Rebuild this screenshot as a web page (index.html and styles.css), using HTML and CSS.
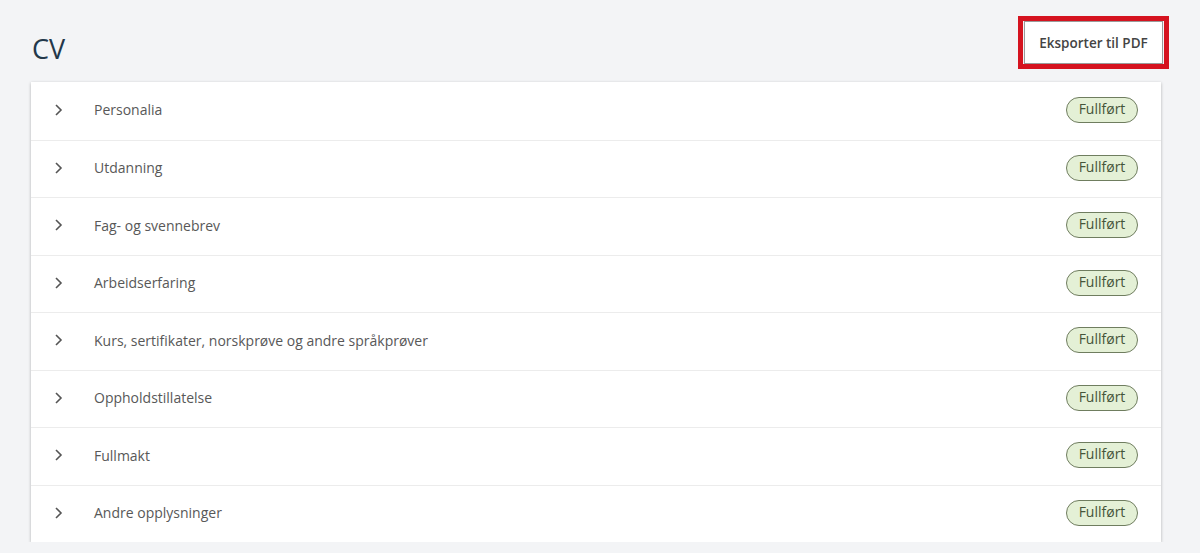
FILE: index.html
```html
<!DOCTYPE html>
<html lang="no">
<head>
    <meta charset="UTF-8">
    <title>CV</title>
    <link rel="stylesheet" href="styles.css">
</head>
<body>
    <div class="page">
        <div class="cv-header">
            <h1>CV</h1>
            <div class="highlight">
                <button class="export-btn">Eksporter til PDF</button>
            </div>
        </div>

        <div class="cv-list">
            <div class="cv-row">
                <svg class="chevron" width="10" height="14" viewBox="0 0 10 14"><path d="M3 2l5 5-5 5" /></svg>
                <span class="cv-label">Personalia</span>
                <span class="badge">Fullført</span>
            </div>
            <div class="cv-row">
                <svg class="chevron" width="10" height="14" viewBox="0 0 10 14"><path d="M3 2l5 5-5 5" /></svg>
                <span class="cv-label">Utdanning</span>
                <span class="badge">Fullført</span>
            </div>
            <div class="cv-row">
                <svg class="chevron" width="10" height="14" viewBox="0 0 10 14"><path d="M3 2l5 5-5 5" /></svg>
                <span class="cv-label">Fag- og svennebrev</span>
                <span class="badge">Fullført</span>
            </div>
            <div class="cv-row">
                <svg class="chevron" width="10" height="14" viewBox="0 0 10 14"><path d="M3 2l5 5-5 5" /></svg>
                <span class="cv-label">Arbeidserfaring</span>
                <span class="badge">Fullført</span>
            </div>
            <div class="cv-row">
                <svg class="chevron" width="10" height="14" viewBox="0 0 10 14"><path d="M3 2l5 5-5 5" /></svg>
                <span class="cv-label">Kurs, sertifikater, norskprøve og andre språkprøver</span>
                <span class="badge">Fullført</span>
            </div>
            <div class="cv-row">
                <svg class="chevron" width="10" height="14" viewBox="0 0 10 14"><path d="M3 2l5 5-5 5" /></svg>
                <span class="cv-label">Oppholdstillatelse</span>
                <span class="badge">Fullført</span>
            </div>
            <div class="cv-row">
                <svg class="chevron" width="10" height="14" viewBox="0 0 10 14"><path d="M3 2l5 5-5 5" /></svg>
                <span class="cv-label">Fullmakt</span>
                <span class="badge">Fullført</span>
            </div>
            <div class="cv-row">
                <svg class="chevron" width="10" height="14" viewBox="0 0 10 14"><path d="M3 2l5 5-5 5" /></svg>
                <span class="cv-label">Andre opplysninger</span>
                <span class="badge">Fullført</span>
            </div>
        </div>
    </div>
</body>
</html>
```

FILE: styles.css
```css
:root {
    --bg: #f3f4f6;
    --text: #585858;
    --title: #23384a;
    --border: #ececec;
    --badge-bg: #e4f0d6;
    --badge-border: #6f7d5f;
    --badge-text: #46553a;
}

body {
    margin: 0;
    background: var(--bg);
    font-family: "Open Sans", "Noto Sans", sans-serif;
    color: var(--text);
}

.page {
    padding: 16px 39px 0 31px;
}

.cv-header {
    display: flex;
    justify-content: space-between;
    align-items: center;
    height: 66px;
}

.cv-header h1 {
    margin: 0 0 2px 1px;
    font-size: 27px;
    font-weight: 400;
    color: var(--title);
}

.highlight {
    border: 5px solid #d5131f;
    padding: 0 1px;
    margin-right: -8px;
    margin-bottom: 13px;
}

.export-btn {
    display: block;
    height: 43px;
    width: 139px;
    background: #fff;
    border: 1px solid #9a9a9a;
    font-family: inherit;
    font-size: 13.5px;
    font-weight: 600;
    color: #444;
    cursor: pointer;
}

.cv-list {
    background: #fff;
    box-shadow: 0 1px 3px rgba(0, 0, 0, 0.28);
}

.cv-row {
    display: flex;
    align-items: center;
    height: 57.5px;
    box-sizing: border-box;
    padding: 0 23px 2px 22px;
    border-top: 1px solid var(--border);
}

.cv-row:first-child {
    border-top: none;
}

.chevron {
    fill: none;
    stroke: #555;
    stroke-width: 1.6;
}

.cv-label {
    flex: 1;
    margin-left: 31px;
    font-size: 14px;
}

.badge {
    box-sizing: border-box;
    width: 72px;
    height: 26px;
    line-height: 22px;
    text-align: center;
    background: var(--badge-bg);
    border: 1.5px solid var(--badge-border);
    border-radius: 13px;
    font-size: 14px;
    color: var(--badge-text);
}
```
